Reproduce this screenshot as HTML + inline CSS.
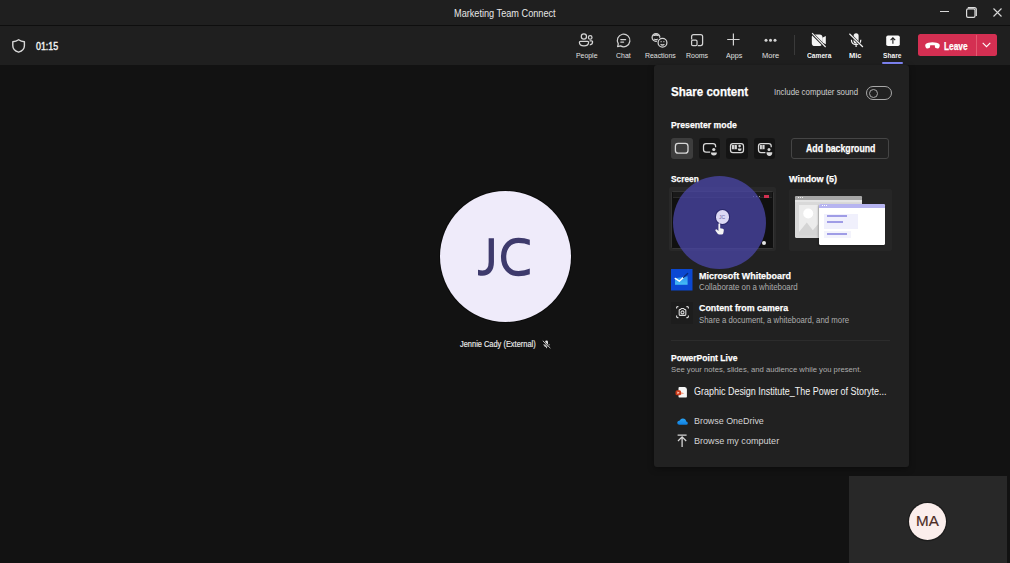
<!DOCTYPE html>
<html><head><meta charset="utf-8">
<style>
*{margin:0;padding:0;box-sizing:border-box}
html,body{width:1010px;height:563px;overflow:hidden;background:#121212;font-family:"Liberation Sans",sans-serif;color:#fff}
.a{position:absolute}
.t{position:absolute;white-space:nowrap;line-height:1;transform-origin:0 0}
svg{position:absolute;overflow:visible}
</style></head><body>
<div class="a" style="left:0;top:0;width:1010px;height:25px;background:#1f1f1f"></div>
<div class="a" style="left:0;top:24.6px;width:1010px;height:1.3px;background:#0e0e0e"></div>
<div class="t" style="left:454.2px;top:8.84px;font-size:10.47px;color:#e6e6e6;transform:scaleX(0.875);">Marketing Team Connect</div>
<div class="a" style="left:940px;top:11px;width:9px;height:1.2px;background:#d8d8d8"></div>
<svg style="left:966px;top:7px" width="11" height="11" viewBox="0 0 11 11"><rect x="0.6" y="1.9" width="8.4" height="8.4" rx="1.4" fill="none" stroke="#dcdcdc" stroke-width="1.2"/><path d="M1.8 0.6H8.4Q10.3 0.6 10.3 2.5V9" fill="none" stroke="#dcdcdc" stroke-width="1.2"/></svg>
<svg style="left:993px;top:8px" width="9" height="9" viewBox="0 0 9 9"><path d="M0.5 0.5L8.5 8.5M8.5 0.5L0.5 8.5" stroke="#d8d8d8" stroke-width="1.1"/></svg>
<div class="a" style="left:0;top:26px;width:1010px;height:39px;background:#1f1f1f"></div>
<svg style="left:12px;top:38.5px" width="14" height="14" viewBox="0 0 14 14"><path d="M6.6 0.8C4.8 2.1 2.9 2.7 0.8 2.8V6.8C0.8 9.8 2.8 12 6.6 13.2C10.4 12 12.4 9.8 12.4 6.8V2.8C10.3 2.7 8.4 2.1 6.6 0.8Z" fill="none" stroke="#d8d8d8" stroke-width="1.4" stroke-linejoin="round"/></svg>
<div class="t" style="left:36.2px;top:40.58px;font-size:10.83px;color:#f4f4f4;transform:scaleX(0.819);-webkit-text-stroke:0.4px #f4f4f4;">01:15</div>
<div class="t" style="left:575.7px;top:51.55px;font-size:7.85px;color:#e0e0e0;transform:scaleX(0.880);">People</div>
<div class="t" style="left:615.8px;top:51.55px;font-size:7.85px;color:#e0e0e0;transform:scaleX(0.887);">Chat</div>
<div class="t" style="left:645.0px;top:51.55px;font-size:7.85px;color:#e0e0e0;transform:scaleX(0.880);">Reactions</div>
<div class="t" style="left:686.0px;top:51.55px;font-size:7.85px;color:#e0e0e0;transform:scaleX(0.889);">Rooms</div>
<div class="t" style="left:725.8px;top:51.55px;font-size:7.85px;color:#e0e0e0;transform:scaleX(0.911);">Apps</div>
<div class="t" style="left:762.2px;top:51.55px;font-size:7.85px;color:#e0e0e0;transform:scaleX(0.956);">More</div>
<div class="t" style="left:806.6px;top:51.55px;font-size:7.85px;font-weight:bold;-webkit-text-stroke:0px #f4f4f4;color:#f4f4f4;transform:scaleX(0.847);">Camera</div>
<div class="t" style="left:849.4px;top:51.55px;font-size:7.85px;font-weight:bold;-webkit-text-stroke:0px #f4f4f4;color:#f4f4f4;transform:scaleX(0.955);">Mic</div>
<div class="t" style="left:883.3px;top:51.55px;font-size:7.85px;font-weight:bold;-webkit-text-stroke:0px #f4f4f4;color:#f4f4f4;transform:scaleX(0.843);">Share</div>
<svg style="left:579px;top:33.3px" width="15" height="14" viewBox="0 0 15 14" fill="none" stroke="#d4d4d4" stroke-width="1.25"><circle cx="4.9" cy="3.5" r="2.6"/><circle cx="11.2" cy="4.4" r="1.8"/><path d="M1.4 8.3H8.6Q9.6 8.3 9.6 9.3Q9.6 12.9 5 12.9Q0.4 12.9 0.4 9.3Q0.4 8.3 1.4 8.3Z"/><path d="M10.6 7.8H12.6Q13.6 7.8 13.6 8.8Q13.6 11.7 10.8 11.8"/></svg>
<svg style="left:616px;top:33.7px" width="15" height="14" viewBox="0 0 15 14" fill="none" stroke="#d4d4d4" stroke-width="1.25"><path d="M1.6 12.6L2.3 9.8A6.3 6.3 0 1 1 4.5 11.9Z" stroke-linejoin="round"/><path d="M4.8 5.6H9.6M4.8 8.1H7.6" stroke-linecap="round"/></svg>
<svg style="left:651px;top:33px" width="17" height="15" viewBox="0 0 17 15" fill="none" stroke="#d4d4d4" stroke-width="1.25"><circle cx="5" cy="4.4" r="3.9"/><path d="M1.6 3.2Q2.6 0.9 5 0.9Q7.4 0.9 8.4 3.2Q5 2.2 1.6 3.2Z" fill="#d4d4d4" stroke="none"/><path d="M3.2 5.9Q5 7.2 6.8 5.9" stroke-width="1.2"/><circle cx="11.5" cy="9.8" r="4.4" fill="#1f1f1f" stroke="#1f1f1f" stroke-width="2.6"/><circle cx="11.5" cy="9.8" r="4.4"/><path d="M9.6 11.3Q11.5 12.7 13.4 11.3"/><circle cx="10.1" cy="8.7" r="0.6" fill="#d4d4d4" stroke="none"/><circle cx="12.9" cy="8.7" r="0.6" fill="#d4d4d4" stroke="none"/></svg>
<svg style="left:691px;top:34px" width="13" height="13" viewBox="0 0 13 13" fill="none" stroke="#d4d4d4" stroke-width="1.25"><path d="M0.6 5.4V2.6Q0.6 0.6 2.6 0.6H9.6Q11.6 0.6 11.6 2.6V9.6Q11.6 11.6 9.6 11.6H6.8"/><rect x="0.6" y="6" width="5.4" height="5.6" rx="1.2"/></svg>
<svg style="left:727px;top:33px" width="13" height="13" viewBox="0 0 13 13" fill="none" stroke="#d4d4d4" stroke-width="1.2"><path d="M6.4 0.4V12.6M0.2 6.5H12.6"/></svg>
<svg style="left:764px;top:38px" width="13" height="5" viewBox="0 0 13 5" fill="#d4d4d4"><circle cx="2" cy="2.2" r="1.5"/><circle cx="6.5" cy="2.2" r="1.5"/><circle cx="11" cy="2.2" r="1.5"/></svg>
<div class="a" style="left:794px;top:35px;width:1px;height:20px;background:#3a3a3a"></div>
<svg style="left:811px;top:33px" width="16" height="15" viewBox="0 0 16 15"><path d="M2.8 1.5H8.6Q11.4 1.5 11.4 4.3V10.1Q11.4 12.9 8.6 12.9H2.8Q0.8 12.9 0.8 10.1V4.3Q0.8 1.5 2.8 1.5Z" fill="#f4f4f4"/><path d="M11.2 4.8L14.8 3.1V11.3L11.2 9.6Z" fill="#f4f4f4"/><path d="M0.6 0L15 14.6" stroke="#1f1f1f" stroke-width="2.6"/><path d="M1.1 0.2L14.6 14" stroke="#f4f4f4" stroke-width="1.1"/></svg>
<svg style="left:848px;top:33px" width="16" height="15" viewBox="0 0 16 15" fill="none" stroke="#f0f0f0" stroke-width="1.2"><rect x="5.6" y="0.2" width="5" height="10.6" rx="2.5" fill="#f0f0f0" stroke="none"/><path d="M3.4 6.8Q3.4 11.6 8.1 11.6Q12.8 11.6 12.8 6.8M8.1 11.6V14"/><path d="M1 0.4L15 14.4" stroke="#1f1f1f" stroke-width="2.6"/><path d="M1.4 0.8L14.9 14"/></svg>
<svg style="left:885.5px;top:34.5px" width="14" height="12" viewBox="0 0 14 12"><rect x="0.2" y="0.4" width="13.6" height="10.6" rx="1.8" fill="#fafafa"/><path d="M6.9 8.8V3M4.6 5.2L6.9 2.9L9.2 5.2" fill="none" stroke="#1f1f1f" stroke-width="1.1"/></svg>
<div class="a" style="left:882px;top:62px;width:21px;height:2px;background:#7f85f5;border-radius:1px"></div>
<div class="a" style="left:918px;top:34.4px;width:79px;height:21.4px;background:#d42f52;border-radius:2.5px"></div>
<div class="a" style="left:975.5px;top:34.6px;width:1px;height:21.2px;background:#e35a72"></div>
<svg style="left:925px;top:41.5px" width="15" height="7" viewBox="0 0 15 7"><path d="M7.5 0.3C4.6 0.3 2 1 0.8 2.1C0.2 2.7 0.1 3.6 0.4 4.6L0.8 5.6C1.1 6.3 1.8 6.6 2.5 6.4L4.3 6C4.9 5.8 5.2 5.2 5.1 4.6L4.9 3.5C6.6 3 8.4 3 10.1 3.5L9.9 4.6C9.8 5.2 10.1 5.8 10.7 6L12.5 6.4C13.2 6.6 13.9 6.3 14.2 5.6L14.6 4.6C14.9 3.6 14.8 2.7 14.2 2.1C13 1 10.4 0.3 7.5 0.3Z" fill="#fff"/></svg>
<div class="t" style="left:944.3px;top:40.62px;font-size:10.61px;font-weight:bold;-webkit-text-stroke:0.25px #fff;color:#fff;transform:scaleX(0.784);">Leave</div>
<svg style="left:982px;top:42px" width="9" height="6" viewBox="0 0 9 6"><path d="M0.7 0.8L4.5 4.6L8.3 0.8" fill="none" stroke="#fff" stroke-width="1.1"/></svg>
<div class="a" style="left:439.5px;top:190.5px;width:131.5px;height:131.5px;border-radius:50%;background:#efebfa;box-shadow:0 0 0 1px #0b0b0b"></div>
<svg style="left:0;top:0" width="1010" height="563"><defs><clipPath id="jc"><rect x="478" y="230" width="51.8" height="50"/></clipPath></defs><g fill="none" stroke="#3e3a6c" stroke-width="5.3" clip-path="url(#jc)"><path d="M491.3 238.3V262C491.3 270 487.5 273.1 482.5 273.1C480 273.1 477.5 272.5 475 271.5"/><path d="M533 243.8C527 240.8 522 240.4 518.5 240.4C509.5 240.4 503.6 247 503.6 257C503.6 267.5 510 273.6 518.5 273.6C522.5 273.6 527 273 533 270"/></g></svg>
<div class="t" style="left:460.3px;top:339.76px;font-size:8.43px;color:#ececec;transform:scaleX(0.883);-webkit-text-stroke:0.15px #ececec;">Jennie Cady (External)</div>
<svg style="left:541.8px;top:339.6px" width="9" height="9" viewBox="0 0 16 15" fill="none" stroke="#e8e8e8" stroke-width="1.5"><rect x="5.6" y="0.2" width="5" height="10.6" rx="2.5" fill="#e8e8e8" stroke="none"/><path d="M3.4 6.8Q3.4 11.6 8.1 11.6Q12.8 11.6 12.8 6.8M8.1 11.6V14"/><path d="M1 0.4L15 14.4" stroke="#121212" stroke-width="3"/><path d="M1.4 0.8L14.9 14"/></svg>
<div class="a" style="left:849px;top:476px;width:158px;height:87px;background:#282828"></div>
<div class="a" style="left:909px;top:502.5px;width:37px;height:37px;border-radius:50%;background:#fbeeec;box-shadow:0 0 0 1.2px #1c1c1c"></div>
<div class="t" style="left:916.3px;top:513.94px;font-size:14.24px;color:#4b2b24;transform:scaleX(1.067);-webkit-text-stroke:0.15px #4b2b24;">MA</div>
<div class="a" style="left:654px;top:65px;width:255px;height:401.5px;background:#212121;border-radius:3px;box-shadow:0 2px 6px rgba(0,0,0,0.35)"></div>
<div class="t" style="left:670.7px;top:85.02px;font-size:13.08px;font-weight:bold;-webkit-text-stroke:0.25px #fff;color:#fff;transform:scaleX(0.885);">Share content</div>
<div class="t" style="left:773.7px;top:87.86px;font-size:8.43px;color:#cfcfcf;transform:scaleX(0.936);">Include computer sound</div>
<div class="a" style="left:866px;top:86px;width:25.8px;height:13.5px;border:1px solid #a8a8a8;border-radius:7px"></div>
<div class="a" style="left:869px;top:88.5px;width:9px;height:9px;border:1.2px solid #a8a8a8;border-radius:50%"></div>
<div class="t" style="left:670.7px;top:120.25px;font-size:9.74px;font-weight:bold;-webkit-text-stroke:0.25px #fff;color:#fff;transform:scaleX(0.895);">Presenter mode</div>
<div class="a" style="left:671px;top:138px;width:21.5px;height:21px;background:#3d3d3d;border-radius:3px"></div>
<div class="a" style="left:698.5px;top:138px;width:21.5px;height:21px;background:#141414;border-radius:3px"></div>
<div class="a" style="left:726px;top:138px;width:21.5px;height:21px;background:#141414;border-radius:3px"></div>
<div class="a" style="left:753.5px;top:138px;width:21.5px;height:21px;background:#141414;border-radius:3px"></div>
<svg style="left:0;top:0" width="1010" height="563" fill="none" stroke="#d8d8d8" stroke-width="1.25"><rect x="675.4" y="143.4" width="12.6" height="9.8" rx="2.8" stroke-width="1.3"/><path d="M715.6 147.2V146.1Q715.6 143.5 713 143.5H706.1Q703.5 143.5 703.5 146.1V149.6Q703.5 152.2 706.1 152.2H710.2"/><circle cx="713.8" cy="149.5" r="1.6" fill="#d8d8d8" stroke="none"/><path d="M710.9 152.5H716.9Q716.9 155.4 713.9 155.4Q710.9 155.4 710.9 152.5Z" fill="#d8d8d8" stroke="none"/><rect x="730.5" y="143.5" width="13" height="9.1" rx="2.4"/><rect x="731.9" y="144.9" width="5" height="4.4" rx="0.5" fill="#d8d8d8" stroke="none"/><path d="M734.4 144.9V149.3" stroke="#141414" stroke-width="0.5"/><circle cx="739.6" cy="146.1" r="1.3" fill="#d8d8d8" stroke="none"/><path d="M737.7 148.5H741.6Q741.6 151 739.65 151Q737.7 151 737.7 148.5Z" fill="#d8d8d8" stroke="none"/><path d="M771.2 147.2V146Q771.2 143.5 768.7 143.5H761Q758.5 143.5 758.5 146V150.1Q758.5 152.6 761 152.6H765.4"/><rect x="759.9" y="144.9" width="4.7" height="4.4" rx="0.5" fill="#d8d8d8" stroke="none"/><path d="M762.25 144.9V149.3" stroke="#141414" stroke-width="0.5"/><circle cx="769" cy="149.6" r="1.5" fill="#d8d8d8" stroke="none"/><path d="M766.5 152.2H772.3Q772.3 156 769.4 156Q766.5 156 766.5 152.2Z" fill="#d8d8d8" stroke="none"/></svg>
<div class="a" style="left:791px;top:137.5px;width:98px;height:21.5px;border:1px solid #454545;border-radius:3px"></div>
<div class="t" style="left:805.5px;top:143.51px;font-size:10.03px;font-weight:bold;-webkit-text-stroke:0.25px #fff;color:#fff;transform:scaleX(0.872);">Add background</div>
<div class="t" style="left:671.0px;top:173.98px;font-size:9.59px;font-weight:bold;-webkit-text-stroke:0.25px #fff;color:#fff;transform:scaleX(0.872);">Screen</div>
<div class="t" style="left:788.9px;top:175.42px;font-size:9.30px;font-weight:bold;-webkit-text-stroke:0.25px #fff;color:#fff;transform:scaleX(0.971);">Window (5)</div>
<div class="a" style="left:669px;top:187px;width:107px;height:64px;background:#282828;border-radius:2px"></div>
<div class="a" style="left:671px;top:190.5px;width:102.5px;height:58.5px;background:#101010;border:1.5px solid #353535;border-radius:1.5px"></div>
<div class="a" style="left:672.5px;top:192px;width:99.5px;height:6px;background:#191919;border-bottom:1px solid #2a2a2a"></div>
<div class="a" style="left:752.5px;top:195.8px;width:1.4px;height:1.4px;background:#9a9a9a"></div>
<div class="a" style="left:755.7px;top:195.8px;width:1.4px;height:1.4px;background:#9a9a9a"></div>
<div class="a" style="left:758.9px;top:195.8px;width:1.4px;height:1.4px;background:#9a9a9a"></div>
<div class="a" style="left:763.6px;top:195.3px;width:5.2px;height:2.4px;background:#d03050"></div>
<div class="a" style="left:761.8px;top:241.1px;width:4px;height:4px;border-radius:50%;background:#e4e4e4"></div>
<div class="a" style="left:673.2px;top:175.5px;width:93px;height:93px;border-radius:50%;background:rgba(76,72,172,0.74)"></div>
<div class="a" style="left:715.6px;top:210.4px;width:13.4px;height:13.4px;border-radius:50%;background:#dcd9f4;box-shadow:0 0 0 1px rgba(30,28,90,0.6)"></div>
<div class="t" style="left:719px;top:214.6px;font-size:5px;color:#6d69aa">JC</div>
<svg style="left:714.8px;top:223.2px" width="10" height="12" viewBox="0 0 10 12"><path d="M3.4 1.2Q3.4 0.2 4.3 0.2Q5.2 0.2 5.2 1.2V5.2L7.8 5.8Q9 6.1 8.8 7.4L8.3 10.2Q8 11.6 6.6 11.6H4.3Q3.3 11.6 2.7 10.8L0.5 7.8Q0 7 0.8 6.5Q1.5 6.1 2.2 6.8L3.4 8Z" fill="#f4f4f4"/></svg>
<div class="a" style="left:788.5px;top:188.5px;width:103px;height:62.5px;background:#262626;border-radius:2px"></div>
<div class="a" style="left:795px;top:195.5px;width:67px;height:42px;background:#d9d9d9;border-radius:1.5px;overflow:hidden"><div class="a" style="left:0;top:0;width:67px;height:4px;background:#a6a6a6"></div><div class="a" style="left:0;top:4px;width:67px;height:2px;background:#e4e4e4"></div><div class="a" style="left:4.3px;top:9.1px;width:19.2px;height:30.2px;background:#ececec"></div></div>
<svg style="left:799.3px;top:204.6px" width="20" height="31" viewBox="0 0 20 31"><circle cx="9.2" cy="8.5" r="5" fill="#fff"/><path d="M0 30.2V27L7.8 17.4L13.8 25.3L19.2 18.9V30.2Z" fill="#d4d4d4"/></svg>
<div class="a" style="left:819.2px;top:203.7px;width:66px;height:41px;background:#fff;border-radius:1.5px;box-shadow:-1px 1px 2px rgba(0,0,0,0.25);overflow:hidden"><div class="a" style="left:0;top:0;width:66px;height:4.5px;background:#b6b4f0"></div><div class="a" style="left:4.5px;top:10px;width:34px;height:15px;background:#f0f0fc"></div><div class="a" style="left:4.5px;top:27px;width:27px;height:7.5px;background:#f3f3fc"></div><div class="a" style="left:7.4px;top:11.4px;width:20.6px;height:2.2px;background:#9f9ce6"></div><div class="a" style="left:7.4px;top:17.2px;width:16.8px;height:2.2px;background:#9f9ce6"></div><div class="a" style="left:7.4px;top:29.1px;width:20.6px;height:2.2px;background:#9f9ce6"></div></div>
<div class="a" style="left:797.5px;top:196.8px;width:1.3px;height:1.3px;background:#eee"></div>
<div class="a" style="left:799.7px;top:196.8px;width:1.3px;height:1.3px;background:#eee"></div>
<div class="a" style="left:801.9px;top:196.8px;width:1.3px;height:1.3px;background:#eee"></div>
<div class="a" style="left:821.7px;top:205px;width:1.3px;height:1.3px;background:#fff"></div>
<div class="a" style="left:823.9px;top:205px;width:1.3px;height:1.3px;background:#fff"></div>
<div class="a" style="left:826.1px;top:205px;width:1.3px;height:1.3px;background:#fff"></div>
<svg style="left:671px;top:269.2px" width="21.5" height="21.5" viewBox="0 0 21.5 21.5"><defs><linearGradient id="wg" x1="0" y1="0" x2="0" y2="1"><stop offset="0" stop-color="#2f8ef2"/><stop offset="1" stop-color="#45c0f5"/></linearGradient></defs><rect width="21.5" height="21.5" fill="#0b48d2"/><path d="M4 9.2L16.6 7.2V15.8H4Z" fill="url(#wg)"/><path d="M4.2 9.4L8.3 12.2L12.6 8.3" fill="none" stroke="#fff" stroke-width="1.4" stroke-linecap="round" stroke-linejoin="round"/><path d="M12.6 8.3L16.6 4.6" fill="none" stroke="#082a7a" stroke-width="1.4" stroke-linecap="round"/></svg>
<div class="t" style="left:698.7px;top:270.55px;font-size:9.74px;font-weight:bold;-webkit-text-stroke:0.25px #fff;color:#fff;transform:scaleX(0.919);">Microsoft Whiteboard</div>
<div class="t" style="left:698.7px;top:283.69px;font-size:8.28px;color:#adadad;transform:scaleX(0.955);">Collaborate on a whiteboard</div>
<div class="a" style="left:671px;top:302px;width:21.5px;height:21.5px;background:#1d1d1d"></div>
<svg style="left:675.5px;top:306.3px" width="13" height="12.5" viewBox="0 0 13 12.5" fill="none" stroke="#dcdcdc" stroke-width="1.1"><path d="M0.6 2.4V1.6Q0.6 0.6 1.6 0.6H2.4M10.4 0.6H11.4Q12.4 0.6 12.4 1.6V2.4M12.4 9.6V10.6Q12.4 11.6 11.4 11.6H10.4M2.4 11.6H1.6Q0.6 11.6 0.6 10.6V9.6"/><path d="M3.2 4.3Q3.2 3.5 4 3.5H4.6L5.3 2.5H7.7L8.4 3.5H9Q9.8 3.5 9.8 4.3V8.6Q9.8 9.4 9 9.4H4Q3.2 9.4 3.2 8.6Z"/><circle cx="6.5" cy="6.4" r="1.5"/></svg>
<div class="t" style="left:698.7px;top:303.25px;font-size:9.74px;font-weight:bold;-webkit-text-stroke:0.25px #fff;color:#fff;transform:scaleX(0.910);">Content from camera</div>
<div class="t" style="left:698.7px;top:316.89px;font-size:8.28px;color:#adadad;transform:scaleX(0.944);">Share a document, a whiteboard, and more</div>
<div class="a" style="left:671px;top:340px;width:219px;height:1px;background:#2c2c2c"></div>
<div class="t" style="left:671.4px;top:353.08px;font-size:9.59px;font-weight:bold;-webkit-text-stroke:0.25px #fff;color:#fff;transform:scaleX(0.891);">PowerPoint Live</div>
<div class="t" style="left:671.4px;top:365.83px;font-size:7.99px;color:#adadad;transform:scaleX(0.964);">See your notes, slides, and audience while you present.</div>
<svg style="left:674.5px;top:386.5px" width="12" height="11" viewBox="0 0 12 11"><path d="M4.5 0.1H9.6Q11.9 0.1 11.9 2.6V9.8Q11.9 10.5 11.2 10.5H4.2Q3.5 10.5 3.5 9.8V1.1Q3.5 0.1 4.5 0.1Z" fill="#f6f6f6"/><path d="M6.2 5.2L9.4 6.3L6.2 7.4Z" fill="#f4a080"/><rect x="0.5" y="3.3" width="5.6" height="5" rx="1.6" fill="#cc3a1a"/><path d="M2.4 4.6L4.6 5.8L2.4 7Z" fill="#ffd6c8"/></svg>
<div class="t" style="left:693.5px;top:386.54px;font-size:10.47px;color:#f2f2f2;transform:scaleX(0.857);">Graphic Design Institute_The Power of Storyte...</div>
<svg style="left:677px;top:417.6px" width="11" height="7" viewBox="0 0 11 7"><defs><linearGradient id="od" x1="0" y1="0" x2="0" y2="1"><stop offset="0" stop-color="#2aa4f4"/><stop offset="1" stop-color="#0f7fe0"/></linearGradient></defs><path d="M2.4 6.8H9.2Q10.8 6.8 10.8 5.2Q10.8 3.6 9.2 3.6Q8.8 0.4 5.8 0.4Q3.6 0.4 2.8 2.6Q0.2 2.8 0.2 4.8Q0.2 6.8 2.4 6.8Z" fill="url(#od)"/></svg>
<div class="t" style="left:693.6px;top:416.30px;font-size:9.45px;color:#d4d4d4;transform:scaleX(0.944);">Browse OneDrive</div>
<svg style="left:0;top:0" width="1010" height="563" fill="none" stroke="#d6d6d6" stroke-width="1.3"><path d="M677.6 435.2H686.6M682.1 447V437M678 441L682.1 436.9L686.2 441"/></svg>
<div class="t" style="left:693.6px;top:435.70px;font-size:9.45px;color:#d4d4d4;transform:scaleX(0.961);">Browse my computer</div>
</body></html>
